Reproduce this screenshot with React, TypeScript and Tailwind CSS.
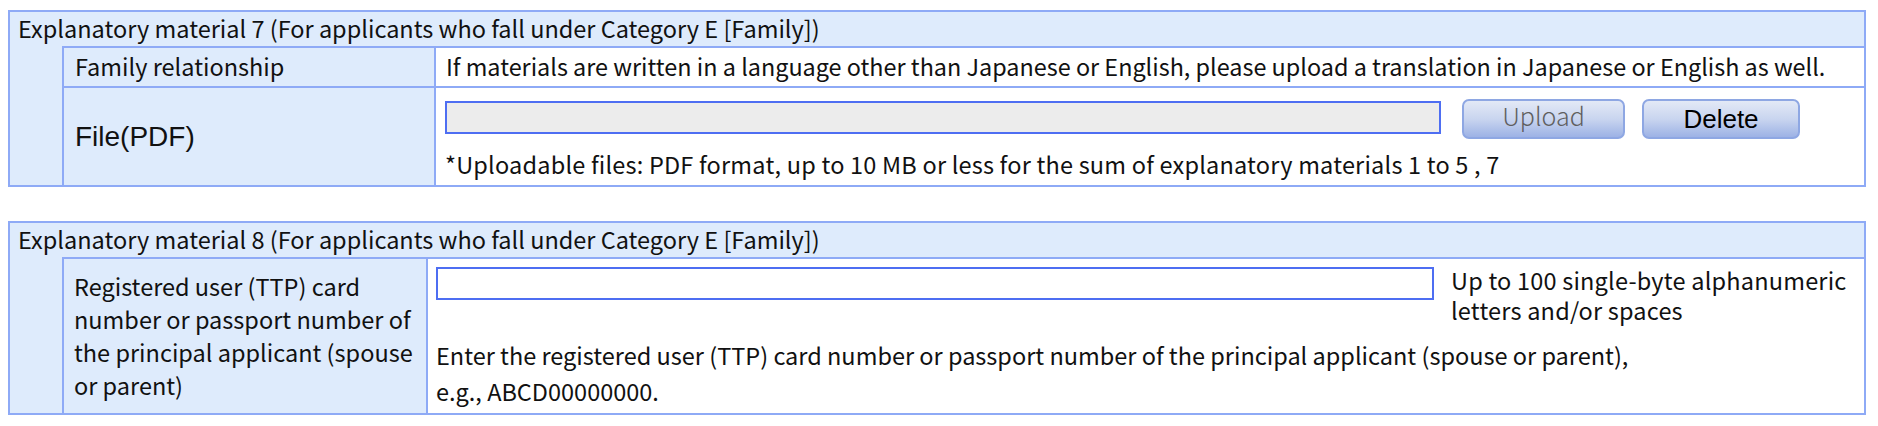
const BODY = "font-['Noto_Sans_CJK_KR','Noto_Sans',sans-serif]";
const ARIAL = "font-['Liberation_Sans',Arial,sans-serif]";

function Box({ title, children }: { title: string; children: React.ReactNode }) {
  return (
    <div className="ml-[8px] w-[1858px] border-2 border-[#8eaaf6] bg-[#deebfc]">
      <div className="h-[34px] flex items-center pl-[8px] text-[23.5px] text-[#111]">{title}</div>
      <div className="flex">
        <div className="w-[52px] shrink-0" />
        <div className="flex-1 border-l-2 border-t-2 border-[#8eaaf6]">{children}</div>
      </div>
    </div>
  );
}

export default function App() {
  return (
    <div className={`${BODY} bg-white w-[1878px] h-[426px] pt-[10px] text-[#111]`}>
      <Box title="Explanatory material 7 (For applicants who fall under Category E [Family])">
        {/* row 1 */}
        <div className="flex border-b-2 border-[#8eaaf6]">
          <div className="w-[372px] shrink-0 border-r-2 border-[#8eaaf6] h-[38px] flex items-center pl-[11px] text-[23.5px]">
            Family relationship
          </div>
          <div className="flex-1 bg-white h-[38px] flex items-center pl-[10px] text-[23.4px]">
            If materials are written in a language other than Japanese or English, please upload a translation in Japanese or English as well.
          </div>
        </div>
        {/* row 2 */}
        <div className="flex">
          <div className={`w-[372px] shrink-0 border-r-2 border-[#8eaaf6] flex items-center pl-[11px] text-[28px] ${ARIAL}`}>
            File(PDF)
          </div>
          <div className="flex-1 bg-white pt-[11px] pb-[6px] pl-[9px]">
            <div className="flex items-start">
              <div className="mt-[2px] w-[996px] h-[33px] bg-[#ececec] border-2 border-[#4e6ef2]" />
              <button className="ml-[21px] w-[163px] h-[40px] rounded-[7px] border-2 border-[#8ea7e3] bg-gradient-to-b from-[#e3e9f6] via-[#c9d5ef] to-[#9db2e5] text-[25px] font-light text-[#5f5f5f] leading-none pb-[8px]">
                Upload
              </button>
              <button className={`ml-[17px] w-[158px] h-[40px] rounded-[7px] border-2 border-[#8ea7e3] bg-gradient-to-b from-[#e3e9f6] via-[#c9d5ef] to-[#9db2e5] text-[26px] text-black leading-none ${ARIAL}`}>
                Delete
              </button>
            </div>
            <div className="mt-[10px] leading-[30px] text-[23.5px] tracking-[0.2px]">
              *Uploadable files: PDF format, up to 10 MB or less for the sum of explanatory materials 1 to 5 , 7
            </div>
          </div>
        </div>
      </Box>

      <div className="h-[34px]" />

      <Box title="Explanatory material 8 (For applicants who fall under Category E [Family])">
        <div className="flex">
          <div className="w-[364px] shrink-0 border-r-2 border-[#8eaaf6] flex items-center pl-[10px] text-[23.5px] leading-[33px]">
            <div>
              Registered user (TTP) card<br />
              number or passport number of<br />
              the principal applicant (spouse<br />
              or parent)
            </div>
          </div>
          <div className="flex-1 bg-white pt-[6px] pb-[4px] pl-[8px] text-[23.5px]">
            <div className="flex items-start">
              <div className="mt-[2px] w-[998px] h-[33px] bg-white border-2 border-[#4e6ef2]" />
              <div className="ml-[17px] leading-[30px] tracking-[0.2px]">
                Up to 100 single-byte alphanumeric<br />
                letters and/or spaces
              </div>
            </div>
            <div className="mt-[12px] leading-[36px]">
              Enter the registered user (TTP) card number or passport number of the principal applicant (spouse or parent),<br />
              e.g., ABCD00000000.
            </div>
          </div>
        </div>
      </Box>
    </div>
  );
}
